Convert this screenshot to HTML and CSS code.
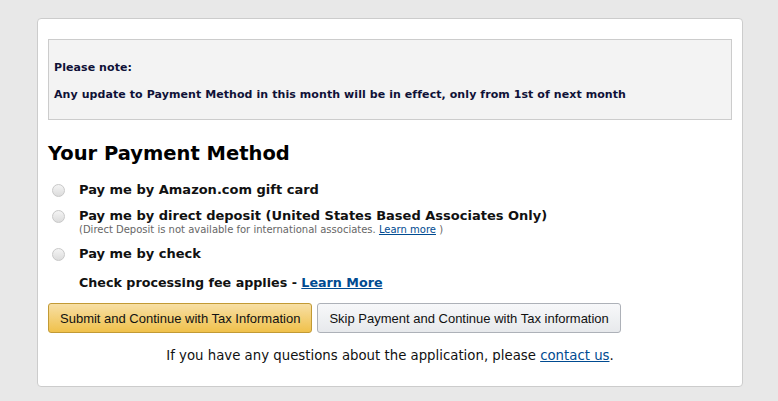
FILE: index.html
```html
<!DOCTYPE html>
<html lang="en">
<head>
  <meta charset="UTF-8">
  <title>Payment Method</title>
  <link rel="stylesheet" href="styles.css">
</head>
<body>
  <div class="card">
    <!-- notice box -->
    <div class="notice">
      <p>Please note:</p>
      <p>Any update to Payment Method in this month will be in effect, only from 1st of next month</p>
    </div>

    <h2>Your Payment Method</h2>

    <form class="methods">
      <label class="method">
        <span class="radio"></span>
        <span class="method-text">Pay me by Amazon.com gift card</span>
      </label>
      <label class="method">
        <span class="radio"></span>
        <span class="method-text">Pay me by direct deposit (United States Based Associates Only)
          <small>(Direct Deposit is not available for international associates. <a href="#">Learn more</a> )</small>
        </span>
      </label>
      <label class="method">
        <span class="radio"></span>
        <span class="method-text">Pay me by check</span>
      </label>
      <div class="fee">Check processing fee applies - <a href="#">Learn More</a></div>

      <div class="actions">
        <button type="button" class="btn btn-primary">Submit and Continue with Tax Information</button>
        <button type="button" class="btn">Skip Payment and Continue with Tax information</button>
      </div>
    </form>

    <p class="help">If you have any questions about the application, please <a href="#">contact us</a>.</p>
  </div>
</body>
</html>
```

FILE: styles.css
```css
body {
  background: #e8e8e8;
  margin: 0;
  padding: 18px 0 0 37px;
  font-family: "DejaVu Sans", Verdana, sans-serif;
  color: #111;
}
.card {
  background: #fff;
  border: 1px solid #ccc;
  border-radius: 4px;
  width: 684px;
  height: 327px;
  padding: 20px 10px;
}
.notice {
  background: #f3f3f3;
  border: 1px solid #ccc;
  padding: 21px 5px 17px;
  font-size: 11px;
  font-weight: bold;
  color: #0f1137;
  letter-spacing: 0.08px;
}
.notice p {
  margin: 0;
  line-height: 14px;
}
.notice p + p {
  margin-top: 13px;
}
h2 {
  font-size: 19.5px;
  margin: 21px 0 15px;
  line-height: 26px;
  color: #000;
}
.methods {
  margin: 0;
}
.method {
  display: flex;
  align-items: flex-start;
  font-size: 13px;
  font-weight: bold;
  line-height: 16px;
  margin-bottom: 10px;
}
.radio {
  width: 11px;
  height: 11px;
  border: 1px solid #c8c8c8;
  border-radius: 50%;
  background: linear-gradient(#f4f4f4, #dcdcdc);
  margin: 2px 14px 0 4px;
  flex-shrink: 0;
}
.method-text small {
  display: block;
  font-size: 10px;
  font-weight: normal;
  color: #666;
  line-height: 12px;
}
a {
  color: #004b91;
}
.fee {
  font-size: 12.7px;
  font-weight: bold;
  line-height: 16px;
  padding-left: 31px;
  margin-top: 13px;
}
.actions {
  display: flex;
  gap: 5px;
  margin-top: 12px;
}
.btn {
  font-family: "Liberation Sans", Arial, sans-serif;
  font-size: 13px;
  color: #111;
  height: 30px;
  padding: 0 11px;
  border: 1px solid #adb1b8;
  border-radius: 3px;
  background: linear-gradient(#f7f8fa, #e7e9ec);
}
.btn-primary {
  border-color: #c29a35;
  background: linear-gradient(#f7dfa5, #f0c14b);
}
.help {
  text-align: center;
  font-size: 13.3px;
  margin: 15px 0 0;
}
```
